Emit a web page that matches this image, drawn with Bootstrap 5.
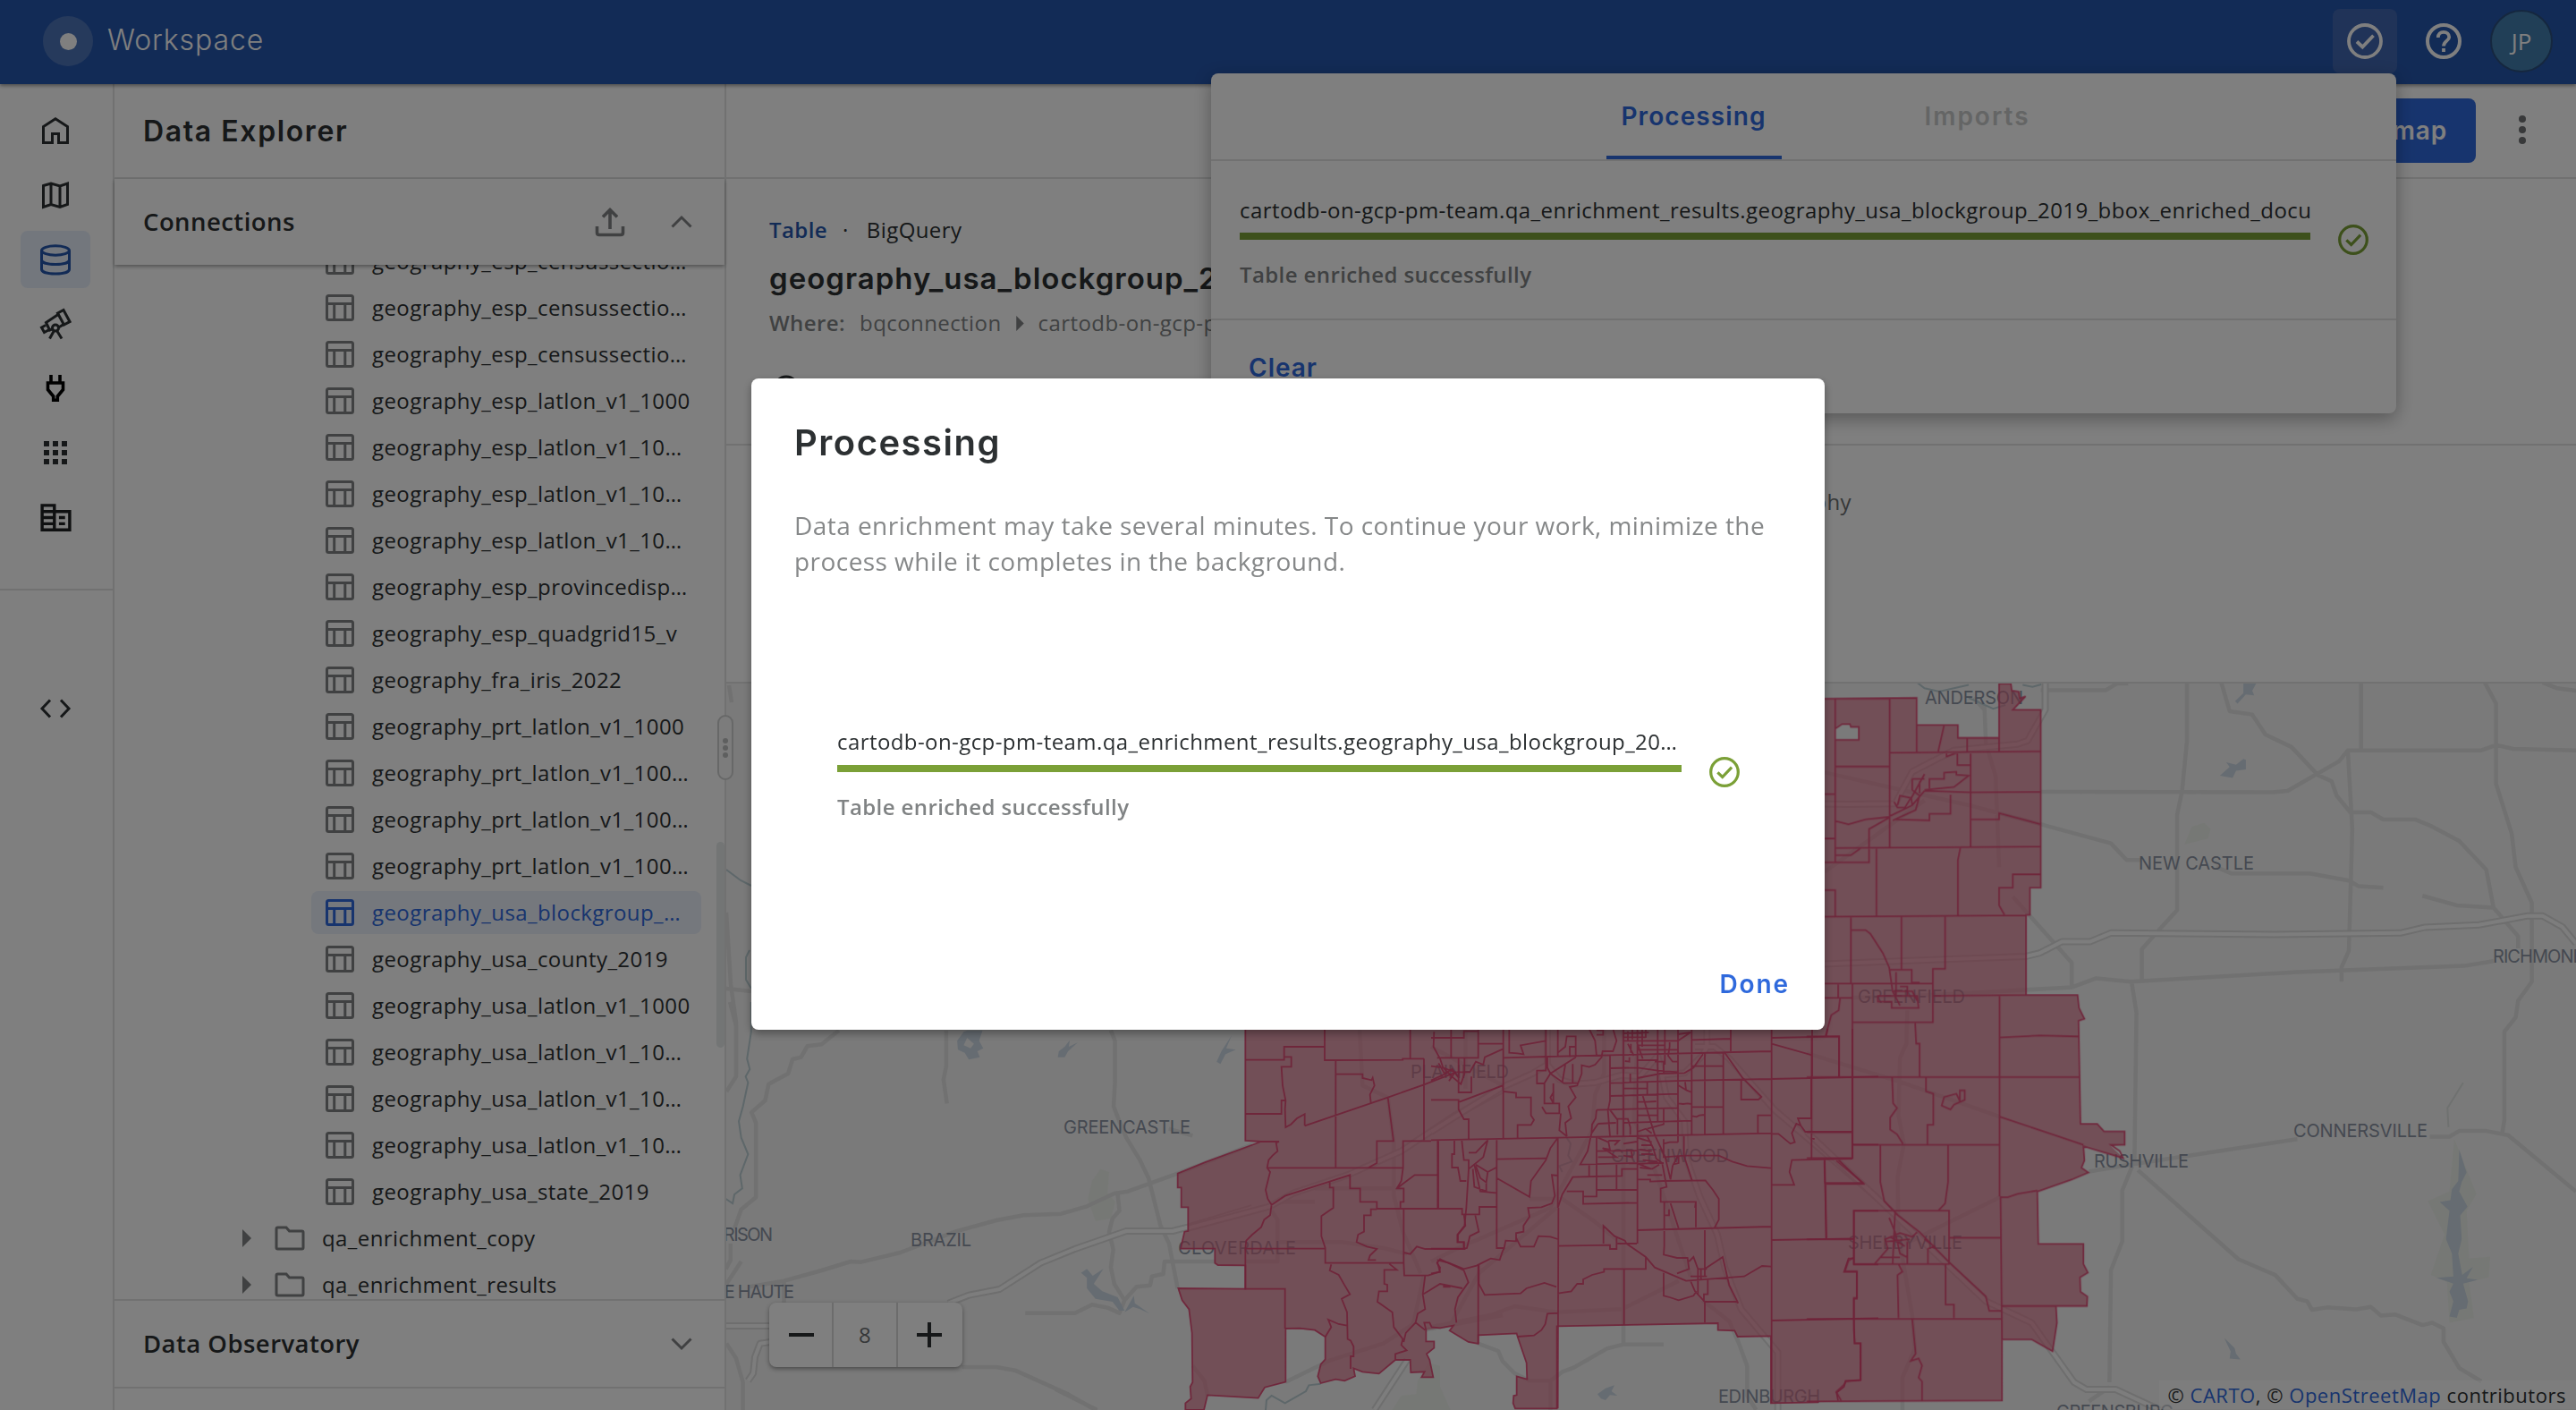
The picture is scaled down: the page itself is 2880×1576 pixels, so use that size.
<!DOCTYPE html>
<html lang="en">
<head>
<meta charset="utf-8">
<title>Workspace – Data Explorer</title>
<link href="https://cdn.jsdelivr.net/npm/bootstrap@5.3.0/dist/css/bootstrap.min.css" rel="stylesheet">
<script src="https://cdn.jsdelivr.net/npm/bootstrap@5.3.0/dist/js/bootstrap.bundle.min.js"></script>
<style>
:root{--ink:#2c3032;--soft:#808384;--line:#e2e3e3;--blue:#2f69dc;--navy:#2556ac;--green:#7ba037}
html,body{height:1576px;overflow:hidden}
body{font-family:"Open Sans",sans-serif;font-size:24px;letter-spacing:.42px;color:var(--ink);background:#fff}
svg{display:block;flex:none}
.st{fill:none;stroke:currentColor;stroke-width:3}
.geo{font-family:Inter,sans-serif}
.topbar{height:94px;background:var(--navy);padding:0 26px 2px 48px;color:#fff;box-shadow:0 2px 4px rgba(0,0,0,.4);z-index:2}
.ws-badge{width:56px;height:56px;background:#4d75b9}
.ws-badge i{width:19px;height:19px;background:#fff}
.ws-name{font-size:32px;letter-spacing:.9px;font-weight:300;margin:-2px 0 0 16px}
.top-btn{width:72px;height:72px;border-radius:8px}
.top-btn.on{background:#4066b0}
.avatar{width:70px;height:70px;background:#437fae;border:2px solid #2b4f7e;font-size:26px;letter-spacing:0}
.rail{width:128px;border-right:2px solid var(--line)}
.rail-a{height:72px;padding-right:2px}
.rail-a span{width:78px;height:64px;border-radius:8px}
.rail-a.on{color:var(--navy)}.rail-a.on span{background:#e6eefb}
.side{width:684px;border-right:2px solid var(--line)}
.side-title{height:106px;padding:1px 0 0 32px;font-size:32px;letter-spacing:1.6px;font-weight:600;border-bottom:2px solid var(--line)}
.sect{padding:0 36px 0 32px;font-weight:600;font-size:27.5px;letter-spacing:.45px}
.conn{height:96px;box-shadow:0 2px 4px rgba(0,0,0,.35);z-index:1}
.obs{height:100px;border-top:2px solid var(--line);border-bottom:2px solid var(--line)}
.tree{height:1156px}
.tree-in{margin-top:-30px}
.trow{height:48px;margin:2px 0 2px 220px;width:436px;padding-left:16px;border-radius:8px;white-space:nowrap}
.trow svg,.frow svg{color:var(--soft)}
.trow span{margin-left:20px}
.trow.on{background:#eaf0fb;color:var(--blue)}.trow.on svg{color:var(--blue)}
.frow{height:52px;padding-left:143px}
.frow span{margin-left:19px}
.thumb{left:673px;top:645px;width:9px;height:230px;border-radius:5px;background:#e6ebeb}
.grip{left:802px;top:799px;width:18px;height:73px;border:2px solid #cfd0d0;border-radius:10px;background:#f8f8f8;z-index:3}
.grip i{width:6px;height:6px;background:#bcbebe;margin:1px}
.mainbar{height:106px;border-bottom:2px solid var(--line);padding-right:40px}
.mapbtn{height:72px;width:240px;background:var(--blue);color:#fff;font-weight:600;font-size:28px;letter-spacing:.8px;border-radius:8px;padding-right:32px;margin-right:40px}
.info{height:298px;border-bottom:2px solid var(--line);padding:37px 0 0 48px;white-space:nowrap}
.ln{height:40px}
.tname{height:50px;margin-top:10px;font-size:33px;font-weight:600;letter-spacing:1px}
.where{margin-top:4px;color:var(--soft)}
.meta{height:266px;padding:45px 810px 0 0;color:#6d7071;border-bottom:2px solid var(--line)}
.zoomc{left:48px;top:692px;width:216px;height:72px;background:#fff;border-radius:8px;box-shadow:0 2px 5px rgba(0,0,0,.4)}
.zoomc>div{width:72px}
.zoomc>div:first-child{width:70px;padding-left:2px}
.zoomc>div+div{border-left:2px solid #d8d9d9}
.attr{right:0;bottom:1px;height:32px;padding:0 11px 0 9px;background:rgba(255,255,255,.5);font-size:22px;letter-spacing:.52px;white-space:nowrap}
.attr a{text-decoration:none;color:var(--blue)}
.pop{left:1354px;top:82px;width:1325px;height:380px;background:#fff;border-radius:8px;box-shadow:0 6px 20px rgba(0,0,0,.32);z-index:5}
.ptabs{height:98px;border-bottom:2px solid var(--line);font-size:28px;font-weight:600;letter-spacing:1.1px}
.ptab{width:196px;padding-top:4px;border-bottom:4px solid transparent}
.ptab.on{color:var(--blue);border-color:var(--blue)}
.ptab.off{color:#c8caca;letter-spacing:2px}
.pitem{height:178px;padding:35px 31px 0 32px;border-bottom:2px solid var(--line)}
.bar{height:8px;background:var(--green)}
.okc{color:var(--green)}
.tx{height:40px;line-height:40px;white-space:nowrap;overflow:hidden}
.done{color:var(--soft);font-weight:600;font-size:24px;letter-spacing:.4px}
.txtbtn{color:var(--blue);font-weight:600;font-size:28px;letter-spacing:1px}
.modal-backdrop.show{opacity:.5;width:100%;height:100%}
.modal-dialog{width:1200px;max-width:1200px;margin:423px auto 0}
.modal-content{height:728px;border:0;border-radius:8px;color:var(--ink);box-shadow:0 4px 10px rgba(0,0,0,.35)}
.mt{margin:47px 0 0 48px;height:50px;font-size:40px;letter-spacing:1.5px;font-weight:600}
.mp{margin:47px 40px 0 48px;line-height:40px;font-size:28px;letter-spacing:.45px;color:#868889}
.mitem{margin:162px 95px 0 96px}
.mfoot{margin-top:auto;height:103px;padding-right:39px}
/* map */
.road{fill:none;stroke:#e2e2e2;stroke-width:4.5;stroke-linejoin:round}
.hw1{fill:none;stroke:#dcdcdc;stroke-width:8;stroke-linejoin:round}
.hw2{fill:none;stroke:#fbfbfb;stroke-width:4;stroke-linejoin:round}
.water{fill:#ccd8e4}.park{fill:#edf1ea}
.river{fill:none;stroke:#bccfd4;stroke-width:2}
.lot{fill:none;stroke:#de4571;stroke-opacity:.9;stroke-width:1.8}
.road,.hw1,.hw2,.lot,.river{vector-effect:non-scaling-stroke}
.place{font-family:Inter,sans-serif;font-size:20px;letter-spacing:0;fill:#8b93a3}
</style>
</head>
<body class="d-flex flex-column">
<svg width="0" height="0" class="position-absolute">
<symbol id="tb" viewBox="0 0 32 30"><rect x="1.5" y="1.5" width="29" height="27" rx="2" class="st"/><path class="st" d="M1 10.5H31M9.7 11V29M21.8 11V29"/></symbol>
<symbol id="fd" viewBox="0 0 34 28"><path class="st" d="M2 3.5Q2 2 3.5 2H13L16.5 6H30.5Q32 6 32 7.500V24.500Q32 26 30.500 26H3.500Q2 26 2 24.500Z"/></symbol>
<symbol id="ok" viewBox="0 0 40 40"><circle cx="20" cy="20" r="18" class="st" style="stroke-width:3.8"/><path class="st" style="stroke-width:3.8" d="M11 20.500 17.300 26.500 29.500 13.800"/></symbol>
<symbol id="tri" viewBox="0 0 10 20"><path d="M0 0 10 10 0 20z" fill="currentColor"/></symbol>
</svg>

<nav class="topbar d-flex align-items-center position-relative">
  <div class="ws-badge rounded-circle d-flex align-items-center justify-content-center"><i class="rounded-circle"></i></div>
  <div class="ws-name geo">Workspace</div>
  <div class="ms-auto d-flex align-items-center" style="gap:16px">
    <div class="top-btn on d-flex align-items-center justify-content-center"><svg width="40" height="40"><use href="#ok"/></svg></div>
    <div class="top-btn d-flex align-items-center justify-content-center"><svg width="40" height="40" viewBox="0 0 40 40"><circle cx="20" cy="20" r="18" class="st" style="stroke-width:4"/><path class="st" style="stroke-width:3.800" d="M13.800 16C13.800 12 16.500 9.800 20 9.800S26.200 12.300 26.200 15.500C26.200 19.500 20 20 20 25.500M20 28V32"/></svg></div>
    <div class="avatar rounded-circle d-flex align-items-center justify-content-center">JP</div>
  </div>
</nav>

<div class="d-flex flex-grow-1" style="min-height:0">
  <aside class="rail d-flex flex-column">
    <div style="height:16px"></div>
    <div class="rail-a d-flex align-items-center justify-content-center"><svg width="36" height="36"><path class="st" d="M4.500 31.500V13.500L18 4.800 31.500 13.500V31.500H21.500V21.500H14.500V31.500Z"/></svg></div>
    <div class="rail-a d-flex align-items-center justify-content-center"><svg width="36" height="36"><path class="st" d="M4.500 7.500 13 5 23 8 31.500 5V28.500L23 31.500 13 28.500 4.500 31.500ZM13 5V29M23 7.500V31.500"/></svg></div>
    <div class="rail-a on d-flex align-items-center justify-content-center"><span class="d-flex align-items-center justify-content-center"><svg width="36" height="36"><g class="st"><ellipse cx="18" cy="8" rx="15.500" ry="5.200"/><path d="M2.500 8V29C2.500 32 9 34 18 34S33.500 32 33.500 29V8M2.500 18.500C2.500 21.500 9 23.500 18 23.500S33.500 21.500 33.500 18.500"/></g></svg></span></div>
    <div class="rail-a d-flex align-items-center justify-content-center"><svg width="36" height="36"><g class="st"><path d="M20.500 6 27 2.500 34 15.500 27.500 19ZM21 7.500 7.500 16.500 11.500 25 15 23.500M21.500 22 28 18M7 19.500 2.500 22 5.500 27.500 11 24.500"/><circle cx="18" cy="22.500" r="3.500"/><path d="M16.500 25.500 11.500 34.500M19.500 25.500 25 34.500"/></g></svg></div>
    <div class="rail-a d-flex align-items-center justify-content-center"><svg width="36" height="36" class="text-black"><path class="st" style="stroke-width:3.600" d="M13 3V12M23 3V12M9.500 12H26.500V19.500L20.300 27V31.200H15.700V27L9.500 19.500Z"/></svg></div>
    <div class="rail-a d-flex align-items-center justify-content-center"><svg width="36" height="36"><path fill="currentColor" d="M5 5h6v6H5zM15 5h6v6h-6zM25 5h6v6h-6zM5 15h6v6H5zM15 15h6v6h-6zM25 15h6v6h-6zM5 25h6v6H5zM15 25h6v6h-6zM25 25h6v6h-6z"/></svg></div>
    <div class="rail-a d-flex align-items-center justify-content-center"><svg width="41" height="41" viewBox="0 0 24 24"><path fill="#1f2122" fill-rule="evenodd" d="M2 3H12V7H22V21H2ZM4 5V7H10V5ZM4 9V11H10V9ZM4 13V15H10V13ZM4 17V19H10V17ZM12 9V19H20V9ZM14 11H18V13H14ZM14 15H18V17H14Z"/></svg></div>
    <div style="height:46px;border-bottom:2px solid var(--line)"></div>
    <div class="rail-a d-flex align-items-center justify-content-center" style="margin-top:96px"><svg width="36" height="24"><path class="st" d="M12 2.500 3 12 12 21.500M24 2.500 33 12 24 21.500"/></svg></div>
  </aside>

  <aside class="side d-flex flex-column">
    <div class="side-title geo d-flex align-items-center">Data Explorer</div>
    <div class="sect conn d-flex align-items-center position-relative">Connections
      <svg class="ms-auto" width="34" height="34" style="color:var(--soft);margin-right:51px"><path class="st" style="stroke-width:3.600" d="M17 25V4M9 11.500 17 3.500 25 11.500M2.500 22V29Q2.500 31.500 5 31.500H29Q31.500 31.500 31.500 29V22"/></svg>
      <svg width="24" height="16" style="color:var(--soft)"><path class="st" d="M1.500 13.500 12 3 22.500 13.500"/></svg></div>
    <div class="tree overflow-hidden position-relative">
      <div class="tree-in d-flex flex-column">
        <div class="trow d-flex align-items-center"><svg width="32" height="30"><use href="#tb"/></svg><span>geography_esp_censussectio…</span></div>
        <div class="trow d-flex align-items-center"><svg width="32" height="30"><use href="#tb"/></svg><span>geography_esp_censussectio…</span></div>
        <div class="trow d-flex align-items-center"><svg width="32" height="30"><use href="#tb"/></svg><span>geography_esp_censussectio…</span></div>
        <div class="trow d-flex align-items-center"><svg width="32" height="30"><use href="#tb"/></svg><span>geography_esp_latlon_v1_1000</span></div>
        <div class="trow d-flex align-items-center"><svg width="32" height="30"><use href="#tb"/></svg><span>geography_esp_latlon_v1_10…</span></div>
        <div class="trow d-flex align-items-center"><svg width="32" height="30"><use href="#tb"/></svg><span>geography_esp_latlon_v1_10…</span></div>
        <div class="trow d-flex align-items-center"><svg width="32" height="30"><use href="#tb"/></svg><span>geography_esp_latlon_v1_10…</span></div>
        <div class="trow d-flex align-items-center"><svg width="32" height="30"><use href="#tb"/></svg><span>geography_esp_provincedisp…</span></div>
        <div class="trow d-flex align-items-center"><svg width="32" height="30"><use href="#tb"/></svg><span>geography_esp_quadgrid15_v</span></div>
        <div class="trow d-flex align-items-center"><svg width="32" height="30"><use href="#tb"/></svg><span>geography_fra_iris_2022</span></div>
        <div class="trow d-flex align-items-center"><svg width="32" height="30"><use href="#tb"/></svg><span>geography_prt_latlon_v1_1000</span></div>
        <div class="trow d-flex align-items-center"><svg width="32" height="30"><use href="#tb"/></svg><span>geography_prt_latlon_v1_100…</span></div>
        <div class="trow d-flex align-items-center"><svg width="32" height="30"><use href="#tb"/></svg><span>geography_prt_latlon_v1_100…</span></div>
        <div class="trow d-flex align-items-center"><svg width="32" height="30"><use href="#tb"/></svg><span>geography_prt_latlon_v1_100…</span></div>
        <div class="trow on d-flex align-items-center"><svg width="32" height="30"><use href="#tb"/></svg><span>geography_usa_blockgroup_…</span></div>
        <div class="trow d-flex align-items-center"><svg width="32" height="30"><use href="#tb"/></svg><span>geography_usa_county_2019</span></div>
        <div class="trow d-flex align-items-center"><svg width="32" height="30"><use href="#tb"/></svg><span>geography_usa_latlon_v1_1000</span></div>
        <div class="trow d-flex align-items-center"><svg width="32" height="30"><use href="#tb"/></svg><span>geography_usa_latlon_v1_10…</span></div>
        <div class="trow d-flex align-items-center"><svg width="32" height="30"><use href="#tb"/></svg><span>geography_usa_latlon_v1_10…</span></div>
        <div class="trow d-flex align-items-center"><svg width="32" height="30"><use href="#tb"/></svg><span>geography_usa_latlon_v1_10…</span></div>
        <div class="trow d-flex align-items-center"><svg width="32" height="30"><use href="#tb"/></svg><span>geography_usa_state_2019</span></div>
        <div class="frow d-flex align-items-center"><svg width="10" height="20"><use href="#tri"/></svg><svg width="34" height="28" style="margin-left:26px"><use href="#fd"/></svg><span>qa_enrichment_copy</span></div>
        <div class="frow d-flex align-items-center"><svg width="10" height="20"><use href="#tri"/></svg><svg width="34" height="28" style="margin-left:26px"><use href="#fd"/></svg><span>qa_enrichment_results</span></div>
      </div>
      <div class="thumb position-absolute"></div>
    </div>
    <div class="sect obs d-flex align-items-center justify-content-between">Data Observatory
      <svg width="24" height="16" style="color:var(--soft)"><path class="st" d="M1.500 2.500 12 13 22.500 2.500"/></svg></div>
  </aside>

  <main class="flex-grow-1 d-flex flex-column" style="min-width:0">
    <div class="mainbar d-flex align-items-center justify-content-end">
      <div class="mapbtn geo d-flex align-items-center justify-content-end">Create map</div>
      <svg width="32" height="40" style="color:#707374" fill="currentColor"><circle cx="12" cy="7" r="4"/><circle cx="12" cy="19" r="4"/><circle cx="12" cy="31" r="4"/></svg>
    </div>
    <div class="info">
      <div class="ln d-flex align-items-center"><span class="fw-semibold" style="color:var(--navy)">Table</span><span style="margin:0 20px 0 17px">·</span><span>BigQuery</span></div>
      <div class="tname geo d-flex align-items-center">geography_usa_blockgroup_2019_bbox</div>
      <div class="ln where d-flex align-items-center"><span class="fw-semibold" style="margin-right:16px">Where:</span><span>bqconnection</span><svg width="9" height="17" style="margin:0 16px"><use href="#tri"/></svg><span>cartodb-on-gcp-pm-team</span></div>
      <svg width="40" height="40" style="margin-top:37px"><circle cx="19" cy="16" r="13" class="st"/></svg>
    </div>
    <div class="meta d-flex justify-content-end">geography</div>
    <div class="flex-grow-1 position-relative overflow-hidden">
      <svg width="2068" height="812" viewBox="812 764 2068 812">
        <rect x="812" y="764" width="2068" height="812" fill="#f4f4f4"/>
        <g transform="translate(800 1120) scale(.38265 .33333)">
          <path class="park" d="M1125 560 1150 570 1145 640 1168 670 1155 725 1110 735 1088 660 1100 600Z"/>
          <path class="river" d="M104 0V100L92 190 100 225 88 250 95 270 80 350 68 400 75 455 95 510 72 580 78 625 55 645 50 675 30 660"/>
          <path class="road" d="M42 0 60 80V250L32 300M360 95 310 142 268 148 250 185 225 192 212 240 155 275 145 330 105 370 118 405V655L75 695 55 760M44 810V865L30 895M75 870 32 945M674 95V215L666 260 676 340M1155 95 1167 130V270L1163 350 1180 400 1200 455 1240 530 1265 590 1300 750 1325 810 1350 960M100 955 200 935 310 900 395 870 425 872 540 840 700 770 820 732 900 715 1010 710 1085 685 1165 642 1205 635 1350 575 1568 478M200 935V1008M1175 645 1180 700 1160 725 1150 770 1162 830 1155 890 1165 945 1195 1000 1230 955 1270 950 1275 920 1308 912 1312 870H1460M905 1043H1050L1100 1015 1145 1025 1180 1043 1195 1000M32 1145 60 1195 80 1275V1368M720 1224H820L875 1235 1030 1315 1110 1368"/>
          <path class="hw1" d="M680 1010 740 983 830 963 950 875 1050 828 1200 768H1335L1380 755 1568 690M20 1086H160M160 1140 130 1145 115 1190 110 1245 95 1270"/>
          <path class="hw2" d="M680 1010 740 983 830 963 950 875 1050 828 1200 768H1335L1380 755 1568 690M20 1086H160M160 1140 130 1145 115 1190 110 1245 95 1270"/>
          <path class="water" d="M735 95H780L770 130 782 155 765 165 772 185 740 193 728 170 708 160 706 130 725 100ZM735 120 725 145 745 155 755 140ZM1000 185 1003 165 1020 150 1035 128 1032 150 1058 136 1030 165 1020 185ZM1464 200 1478 165 1508 112 1492 155 1520 160 1490 175 1475 208ZM1068 908 1085 895 1102 918 1133 895 1105 945 1130 970 1175 990 1195 1035 1180 1035 1160 1005 1110 995 1085 960 1085 925ZM1195 1040 1222 985 1225 1010 1268 1045 1240 1030 1220 1022Z"/>
        </g>
        <path class="road" d="M812 1020 817 1100 823 1143V1200M812 1105 840 1108M815 766 818 785"/>
        <path class="river" d="M812 972 828 984 840 990M838 1062 834 1070V1095L840 1105"/>
        <g transform="translate(1180 1150) scale(.33333)">
          <path class="road" d="M1020 0 1030 190 1115 230 1135 380V560L1165 680 1225 820M725 610 745 640V780H640M745 715H960L1100 735 1180 755M772 1184 920 1112 1100 1055 1200 990 1235 830M1240 1010 1500 960M870 535H1160M870 580H735M460 1130 500 1180 510 1230M0 1208 140 1278M460 358 380 335"/>
          <path class="hw1" d="M445 668 720 595 800 550 980 490 1160 410 1250 350 1340 290 1500 205M1070 1278 1180 1110"/>
          <path class="hw2" d="M445 668 720 595 800 550 980 490 1160 410 1250 350 1340 290 1500 205M1070 1278 1180 1110"/>
          <path class="river" d="M705 1278 708 1245 725 1230 770 1255 840 1215 850 1195 890 1190"/>
          <path class="park" d="M1215 1180 1250 1120 1290 1130V1200L1325 1278H1130L1160 1230 1210 1225Z"/>
        </g>
        <g transform="translate(1600 1150) scale(.33333)">
          <path class="road" d="M157 1055 225 1080 240 1115 280 1155 330 1180 400 1180 440 1150 480 1135 590 1072 645 1058H780M645 1058V0M1025 1035 1060 1130V1230L1090 1278M400 1180V1278M0 1000 200 960 280 930 420 950 640 940 740 890 830 845M330 570 440 570 540 640 640 720M240 190 0 60M0 780 80 740 400 600 540 340 550 220 580 150 580 0M115 0V200M420 600 160 820 60 1000M690 90 680 300 760 500 870 830M910 910 1000 980 1030 1050"/>
          <path class="hw1" d="M0 345 95 285 240 195 340 150 390 120M390 0V120L430 170 480 185 550 180 640 155 700 160 760 90 790 230 850 310 855 430 900 560 960 690 985 800 1040 940 1163 1085V1278M885 60H950L1000 100 1150 270 1500 570M925 0V60L910 90 850 148 770 155"/>
          <path class="hw2" d="M0 345 95 285 240 195 340 150 390 120M390 0V120L430 170 480 185 550 180 640 155 700 160 760 90 790 230 850 310 855 430 900 560 960 690 985 800 1040 940 1163 1085V1278M885 60H950L1000 100 1150 270 1500 570M925 0V60L910 90 850 148 770 155"/>
          <path class="water" d="M558 1225 585 1205 615 1195 605 1215 625 1230 600 1228 585 1245 570 1240Z"/>
          <path class="river" d="M455 365 468 385 460 425 472 445 430 460 440 480"/>
        </g>
        <g transform="translate(2020 740) scale(.54847 .53316)">
          <path class="park" d="M785 345 810 337 823 350 818 370 770 382ZM1320 1000 1365 1115 1345 1150 1350 1250 1393 1247 1390 1290 1350 1300 1360 1375 1310 1385 1305 1300 1272 1285 1300 1200 1266 1130 1310 1110Z"/>
          <path class="road" d="M775 43V165L765 270 755 320V520L715 565 683 602V665M845 43 862 103 908 110 935 152 988 178 1042 237 1070 250 1080 280 1108 315H1150L1175 330H1240L1275 345 1330 375 1385 435 1400 515 1450 575V600M477 59H610L632 45H655M1130 43V187M1568 185 1440 182 1405 174 1375 185H1103L1085 208 980 270 950 273 477 272M1103 187 1112 350 1105 605 1090 640V670M1382 43 1405 87V255L1437 360 1445 430 1478 505V670L1450 710 1445 745 1422 775V960L1417 992M1500 43 1530 55 1568 60M392 317 477 340 620 380 652 415H680M835 430 865 443H1025L1105 458 1125 470 1175 473M1255 490 1325 510 1400 515M420 492 540 630V680M90 704 250 698 540 682 590 663 660 670 1000 650 1340 637 1400 627M662 670 672 735 668 1045 643 1108V1215L620 1275 617 1510M575 1068 650 1055 1000 1000M1270 995H1310L1330 983H1385L1430 992 1568 1110M675 1065 880 1252 955 1285 1000 1335 1020 1340 1030 1358 1060 1353 1120 1357 1150 1352 1170 1370 1200 1368 1255 1390 1275 1385 1298 1397V1425L1330 1480 1375 1508M362 90 365 170 385 240 392 430M30 230 180 265 330 300 392 317M36 440 240 290M205 730 203 800 190 830 187 950 198 1010 185 1080 187 1200 215 1370 220 1440 195 1500V1568M0 820 190 880 393 953M200 1220 393 1122M340 75 362 100M617 1520 575 1550"/>
          <path class="hw1" d="M486 43V100L450 165 430 172 300 185 215 230 180 297 85 298 0 297M36 633 280 623 447 617 475 610 520 586H578L620 568 955 571 1210 568 1260 556 1370 551 1470 532H1500L1540 555 1568 590M0 985 150 1130 365 1340 458 1385 545 1510 570 1525H630L720 1568"/>
          <path class="hw2" d="M486 43V100L450 165 430 172 300 185 215 230 180 297 85 298 0 297M36 633 280 623 447 617 475 610 520 586H578L620 568 955 571 1210 568 1260 556 1370 551 1470 532H1500L1540 555 1568 590M0 985 150 1130 365 1340 458 1385 545 1510 570 1525H630L720 1568"/>
          <path class="river" d="M225 43 240 55 270 62 330 48M330 75 380 98 405 90M440 48 460 52 478 47"/>
          <path class="river" style="stroke:#dfe3e0" d="M1338 882 1306 935 1308 975"/>
          <path class="water" d="M890 45H916L908 60 912 70 895 68 878 87 873 82 890 65ZM842 238 862 220 855 210 875 215 890 203 895 205V225L875 228 868 243ZM1330 1022 1345 1070 1335 1090 1330 1110 1347 1142 1332 1160 1335 1210 1328 1240 1336 1285 1358 1268 1345 1292 1368 1295 1338 1303 1348 1340 1345 1355 1330 1358 1325 1375 1310 1372 1318 1340 1310 1320 1318 1303 1284 1291 1318 1288 1315 1240 1303 1210 1310 1150 1290 1132 1312 1128 1315 1105 1328 1088ZM851 1417 872 1438 875 1450 884 1462 862 1460 864 1445Z"/>
        </g>
        <g class="place">
          <text x="2152" y="787" textLength="110">ANDERSON</text><text x="2391" y="972" textLength="129">NEW CASTLE</text><text x="2787" y="1076" textLength="104">RICHMOND</text>
          <text x="2077" y="1121" textLength="120">GREENFIELD</text><text x="2564" y="1271" textLength="150">CONNERSVILLE</text><text x="2341" y="1305" textLength="106">RUSHVILLE</text>
          <text x="2066" y="1396" textLength="128">SHELBYVILLE</text><text x="1189" y="1267" textLength="142">GREENCASTLE</text><text x="1577" y="1205" textLength="110">PLAINFIELD</text>
          <text x="1801" y="1299" textLength="132">GREENWOOD</text><text x="1317" y="1402" textLength="132">CLOVERDALE</text><text x="1018" y="1393" textLength="68">BRAZIL</text>
          <text x="1921" y="1568" textLength="114">EDINBURGH</text><text x="772" y="1387" textLength="92">HARRISON</text><text x="764" y="1451" textLength="124">TERRE HAUTE</text>
          <text x="2299" y="1585" textLength="131">GREENSBURG</text>
        </g>
        <g fill="#dc6983" opacity=".62">
          <path transform="translate(1180 1150) scale(.33333)" d="M637-300V375L690 378 500 448 410 485V532H422V598H445V678L433 680 420 737H535V785L545 792 637 793V872L412 870 425 910 448 940 458 1020 460 1185 452 1200 455 1240 436 1255V1278H498L510 1228 680 1238 702 1202 772 1184V1005L870 1010 905 1033V1108L890 1125 880 1165 890 1188 940 1175 970 1180 1005 1165 1000 1138 1030 1150 1085 1156 1140 1110H1190L1192 1152 1238 1150 1228 1168H1267L1255 1110 1245 1090 1270 1070V1048H1243V1010L1290 1003 1335 995 1322 1012 1385 1050 1418 1056V1027L1547 1021 1550 1032 1580 1120 1582 1175 1547 1165V1228L1537 1230 1535 1255 1542 1273H1682V997L2222 987V1010L2278 1012 2288 1032 2400 1030V1255L2700 1249V-300Z"/>
          <path transform="translate(2020 740) scale(.54847 .53316)" fill-rule="evenodd" d="M0 77 224 75V132H308V159H392V45H416L418 60 432 62 434 76 446 72 420 100H477V473H455V530H447V698H552L555 725 566 748 554 752 558 968H592L606 984H648V1012L620 1015 645 1040 564 1015 566 1045 560 1060 574 1070 540 1085 470 1110 472 1220H564V1262L573 1280 557 1290 558 1320 572 1330 571 1350H508L510 1385 501 1445 458 1420H398V1548L0 1550ZM58 140 72 130 88 130 90 136H106V163H58Z"/>
        </g>
        <g class="lotset">
          <path class="lot" transform="translate(1180 1150) scale(.33333)" d="M637-300V375L690 378 500 448 410 485V532H422V598H445V678L433 680 420 737H535V785L545 792 637 793V872L412 870 425 910 448 940 458 1020 460 1185 452 1200 455 1240 436 1255V1278H498L510 1228 680 1238 702 1202 772 1184V1005L820 1004 870 1010 905 1033V1108L890 1125 880 1165 890 1188 940 1175 970 1180 1005 1165 1000 1138 1030 1150 1085 1156 1140 1110H1190L1192 1152 1238 1150 1228 1168H1267L1255 1110 1245 1090 1270 1070V1048H1243V1010L1237 985H1255L1262 1000 1290 1003 1335 995 1322 1012 1385 1050 1418 1056V1027L1547 1021 1550 1032 1580 1120 1582 1175 1547 1165V1228L1537 1230 1535 1255 1542 1273H1682V997L2222 987V1010L2278 1012 2288 1032 2400 1030V1255L2560 1252"/>
          <path class="lot" transform="translate(1180 1150) scale(.33333)" d="M637 104H767V60H903M767 94H791V127H758L762 190 772 240 770 270 772 330 790 320 810 300 836 286V325M637 285H758V240H772M903 0V105H940L1165 104V100H1236M1190 0V100M940 105V465M940 152H1030V165L1060 172 1064 164 1070 190 1055 220 1058 248M836 325 1115 230 1236 187 1345 145M1115 230 1134 376H1078V450L1050 465M1236 100V373M710 466H1166V376H1260M690 378H750L740 382 745 410 728 425 715 440 710 466 720 480 705 540 712 570 725 590 770 560 920 512 988 490V535H1022V580H1078V603H1364V622H1422V597H1480M920 512V532H932V600L892 628V695L905 735V785H1166M725 590 720 625 700 640 690 665 660 690 640 710 637 737H905M637 737V872H770V1005M1166 466 1160 510 1145 535H1168V580H1157V603M1145 535 1165 520 1205 490H1284M1284 376V603M1078 605H1058V625H1035V680L1015 690 1010 715 1045 730 1078 738 1055 760 1050 775H1075M1168 603V785L1170 827H1250L1288 815 1290 800 1280 785 1290 772 1350 800 1370 810M1168 750 1190 755 1212 730 1240 738H1375M1364 622H1370L1375 660 1350 690V715H1370V735M925 790 920 810 950 825 970 860 988 890 960 905 978 950 980 1040 990 1045 1000 1065V1098H990V1140M978 995 950 990 915 975 925 1000 905 1033M1120 788 1145 808H1103V855L1113 858V880H1085L1080 915 1130 950 1135 1000 1165 1040 1160 1060 1178 1078 1140 1090V1108M1240 827 1232 890 1240 940 1215 955 1208 985 1175 1020 1168 1050M1208 985 1240 1010M1370 810 1385 850 1350 900 1340 940 1345 985M1232 890 1250 880 1290 855 1365 870M1300 862H1330M1300 865H1325M1418 790V1056"/>
          <path class="lot" transform="translate(1600 1150) scale(.33333)" d="M158 0V97H20M242 0V368M158 50H242M242 97 390 93 600 88 1140 75M0 373 425 365 1140 350M0 238H92V270L110 303H126V370M95 245 240 190 242 210 285 215V230H335V290L345 305 335 322H290V365M92 100V213H135V160M0 30H110V8H158M67 0V97M10 10 8 60 30 100 40 130 70 160 100 185 112 150V100M0 125 40 130 80 145 60 175M85 145H130L150 110 175 120 180 95 240 68M0 173 60 145M25 115 45 150 70 135 90 160M262 0V80L290 82 310 85 300 55 385 40M385 0V140H355V183H380M390 95V130L400 150 445 182H492M425 0V95M485 95V25H455L450 60 425 80M485 60H465V95M380 182 400 150 485 95M450 120 440 180M475 118V182M530 0 550 40 555 90M555 5H577V20H555M600 90V240L593 275 600 360M610 0 622 40 610 75 575 75 572 95 550 120 530 128 505 122 505 150 490 190 465 195 485 230 460 260 470 300 450 315 455 360M435 283 430 340 455 360M380 182V250H430V283L385 283 372 262M410 183V250L400 230 412 210M645 0V360M692 0V720M760 0V310M784 0V120M828 0V380M874 0V355M918 80V355M980 80V352M1005 0V75M874 37 1005 33M645 15 730 12M645 28H720M660 8V40M675 0V35M708 0V60M720 0V30M645 40H828L870 12 828 18M600 132 692 130 760 140 828 145M600 182 700 178 875 173 1140 168 1500 160M874 125H980M874 262H980M876 292 890 295 900 290 918 288M830 250 845 252 860 250 874 252M645 200H725V180M725 200V220M600 225 692 222 828 218M555 272 700 268 828 265M692 290H760M645 315 874 308M560 318 620 315M555 272 552 300 540 320 538 350 525 410 500 455 690 450M560 318 538 350M600 272 625 305V355M622 302H660L668 330V355M692 70H828M692 55H784M692 105H760M670 50V80M800 45V60L795 90 810 110H828M660 50 680 90M690 45 710 100M650 108 665 110V95M750 110H780V150H765M692 165 770 150 850 148 880 130 912 85M710 225 750 355 785 430 803 505M692 245H725L755 243M668 150V180M725 335 780 320V265M692 345 720 335 740 350M985 80 1045 165 1108 228 1098 237H1040V170M1096 350V290H1140M1142 0V1255M1142 50 1278 88V160M1278 0V160M1142 30 1368 25V160M1325 25 1330 0M1413 0V435M1275 160V300H1230L1240 325 1225 318 1210 350 1220 380 1205 385 1165 352H1142M1240 325 1255 345H1413M1276 350V435M1276 365 1286 370M1413 388H1500M1142 523H1218L1202 480 1210 440 1413 435M1320 440 1325 703M1325 520H1450L1365 438M1142 708 1418 703V790H1500M1418 703V610H1500M22 375V603M220 373V735H245L250 710 285 712V685L310 680 310 660 330 630 325 600 370 598 405 585 415 560 405 490 425 492M425 365 400 400 385 440 335 510 330 563 220 500M220 437 385 434M425 365V600L440 555 475 497 550 495 640 493V470H690M427 600 425 1273M830 190 855 205 852 178M855 205 872 212M530 455V495M555 360V562H510V545H455M555 410 690 408M622 455V540M555 540H690M510 562V587L690 583M560 365 595 380 600 405 575 400 622 430H560M595 375H630L615 390M645 385 690 378M645 425 675 430 670 405M692 365 740 380M725 360 745 400 755 435 775 450 790 530 770 535V580H888V665M705 390H740M700 405 740 410M705 420H745M710 440 760 445 700 455 740 470 700 465M725 490H775M740 470 765 455M780 370V430L850 425H965L1010 445 1060 460 1140 467M780 385 800 380H828M828 425 810 460 803 505M830 425V450L810 455M848 355V425L875 508M690 452 780 450M692 505H735V512L780 510 920 508 945 540 965 570V640L950 668M692 675 1140 663M782 580V730L780 757 825 768H860L865 805 825 820M803 585 830 668M785 625H798V605M885 600 888 580M918 675V805M578 720V660L615 695 650 710 655 720 720 765 750 800 855 845 1050 830 1110 795 1140 797M425 728 600 725V738H622V700M625 720H690M720 765V805H580V815L540 825 510 840V855H490L470 880 425 887M647 808V992M160 790V855L180 892 300 887 320 870 380 852 420 865M160 790 200 770 230 775 240 745 245 735M285 700 300 730H345L360 695 400 697 425 705M780 818V895L800 900 830 910 880 895 890 880M870 845 885 880 918 915 1025 915 1030 920M918 915V985M895 805V845M905 808V840M918 830V805L978 765 1000 860 1030 920M928 840V890H915V915M865 780 880 765 895 805H925M870 830H925M895 845V890M425 953 390 955 383 990 370 1010 345 1028 290 1032M1142 978 1500 970M1418 970 1420 1055H1440V1178L1390 1180 1385 1200 1360 1220 1365 1247M1418 970V905H1428V815H1385L1400 770H1418M78 375V420H70V465H90L98 510H118M103 375 110 440H126V470L118 600 112 660 88 690V715H110V735M126 415H150L190 373 175 430 126 470M145 455 165 545 218 550M150 455 190 480 218 465M190 480 185 515 165 500 150 460M140 470 145 530 185 545V515M148 625 160 680 130 695 120 735 110 737H0M20 780 30 815 0 820M20 775 60 785 110 805 150 795 160 790"/>
          <path class="lot" transform="translate(2020 740) scale(.54847 .53316)" d="M0 77 224 75V132H308V159H392V45H416L418 60 432 62 434 76 446 72 420 100H477V473H455V530H447V698H552L555 725 566 748 554 752 558 968H592L606 984H648V1012H620L638 1025 645 1040 564 1015 566 1045 560 1060 574 1070 540 1085 470 1110 472 1220H564V1262L573 1280 557 1290 558 1320 572 1330 571 1350H508L510 1385 501 1445 458 1420H398V1548L0 1550M58 140 72 130 88 130 90 136H106V163H58M58 76V420M169 76V388M58 219H169M169 190 477 187M224 132V190M268 187 280 132M285 187V198L307 190V216H334M327 159V187M392 159V187M334 187V388M240 270 334 273 477 272M58 390 477 387M36 420H127V350L170 325M58 405 90 405 110 390M36 277H58M36 370H58M334 330H392V317L477 340M58 333 85 340 120 330 165 325 215 300 240 270M215 300 213 285 240 235M240 268 300 262 330 238 305 236 305 230 280 232V245H250V265M180 330 250 332V318H293V278M178 293 185 305 200 305 212 285 190 280 185 300M215 245V268L230 280 222 310 175 332M215 245H240M230 250V275M142 390V532M308 532V415L313 390M36 534 447 531M392 510V473H420V445H477M392 510 403 530M36 478H58V534M90 534V674H36M90 562 120 562 130 570 155 610 168 640 175 690 190 720M193 534V645M168 645H214V672H230M182 650V700M282 534V643H257V674M90 674H257V755H93V674M36 704H64V676M145 700H225L228 725H173V712H145ZM190 680H205V700M175 690H215L225 710M257 700 447 698M0 704H92M393 698V1120M393 787 475 783 555 785M0 870H557M93 755V1040H0M0 986H93M221 757 223 800 230 800V870M66 870V785H0M10 785V985M68 704 65 730 50 740 38 785M174 870 176 925 184 935 170 955V980L184 990 196 1010M243 870V900L258 905V970H246V1012M93 1012H393M393 953 564 1012M275 930 280 912 305 905 312 920V898H322V918L300 928 293 938ZM150 1012V1090L158 1130 186 1160 230 1195 290 1258 365 1330 372 1360H397M288 1012V1090L282 1135 268 1150M96 1150H290V1262H96ZM290 1207H396M395 1120 398 1420M396 1122 410 1122 430 1115 470 1108M36 1045 37 1092H115L60 1045M38 1092 40 1208M0 1210H96M96 1248 85 1255 78 1277H102V1333H96V1400L98 1428H110V1505L80 1508 76 1515 60 1530 70 1548M187 1262 195 1278 185 1285 187 1375M283 1262V1347H300V1375M0 1377H398M398 1350H508M215 1377 222 1450 212 1465 228 1460 235 1475 228 1500 235 1508V1548M138 1262 165 1230 160 1210 190 1197 215 1205 225 1195M168 1165 180 1195 190 1240 205 1248V1262M180 1155 175 1262M170 1205 200 1225M160 1215 210 1210M150 1248H190M247 1262V1230L260 1225 240 1210M205 1215V1248"/>
        </g>
      </svg>
      <div class="zoomc position-absolute d-flex">
        <div class="d-flex align-items-center justify-content-center"><svg width="28" height="28"><path class="st" style="stroke-width:4" d="M0 14H28"/></svg></div>
        <div class="d-flex align-items-center justify-content-center" style="color:#6b6e70">8</div>
        <div class="d-flex align-items-center justify-content-center"><svg width="28" height="28"><path class="st" style="stroke-width:4" d="M0 14H28M14 0V28"/></svg></div>
      </div>
      <div class="attr position-absolute d-flex align-items-center"><span>© <a href="#">CARTO</a>, © <a href="#">OpenStreetMap</a> contributors</span></div>
    </div>
  </main>
</div>

<div class="grip position-absolute d-flex flex-column align-items-center justify-content-center"><i class="rounded-circle"></i><i class="rounded-circle"></i><i class="rounded-circle"></i></div>

<section class="pop position-absolute">
  <div class="ptabs geo d-flex justify-content-center" style="padding-left:71px;gap:121px">
    <div class="ptab on d-flex align-items-center justify-content-center">Processing</div>
    <div class="ptab off d-flex align-items-center justify-content-center">Imports</div>
  </div>
  <div class="pitem d-flex justify-content-between">
    <div style="width:1197px">
      <div class="tx">cartodb-on-gcp-pm-team.qa_enrichment_results.geography_usa_blockgroup_2019_bbox_enriched_docu</div>
      <div class="bar" style="margin-top:5px"></div>
      <div class="tx done" style="margin-top:19px">Table enriched successfully</div>
    </div>
    <svg class="okc" width="34" height="34" style="margin-top:36px"><use href="#ok"/></svg>
  </div>
  <div class="txtbtn geo" style="padding:32px 0 0 42px">Clear</div>
</section>

<div class="modal-backdrop show"></div>
<div class="modal d-block" tabindex="-1">
  <div class="modal-dialog"><div class="modal-content">
    <h2 class="mt geo d-flex align-items-center">Processing</h2>
    <p class="mp">Data enrichment may take several minutes. To continue your work, minimize the process while it completes in the background.</p>
    <div class="mitem d-flex justify-content-between">
      <div style="width:944px">
        <div class="tx">cartodb-on-gcp-pm-team.qa_enrichment_results.geography_usa_blockgroup_20…</div>
        <div class="bar" style="margin-top:6px"></div>
        <div class="tx done" style="margin-top:19px">Table enriched successfully</div>
      </div>
      <svg class="okc" width="34" height="34" style="margin-top:37px"><use href="#ok"/></svg>
    </div>
    <div class="mfoot d-flex align-items-center justify-content-end"><span class="txtbtn geo" style="letter-spacing:1.9px">Done</span></div>
  </div></div>
</div>
</body>
</html>
